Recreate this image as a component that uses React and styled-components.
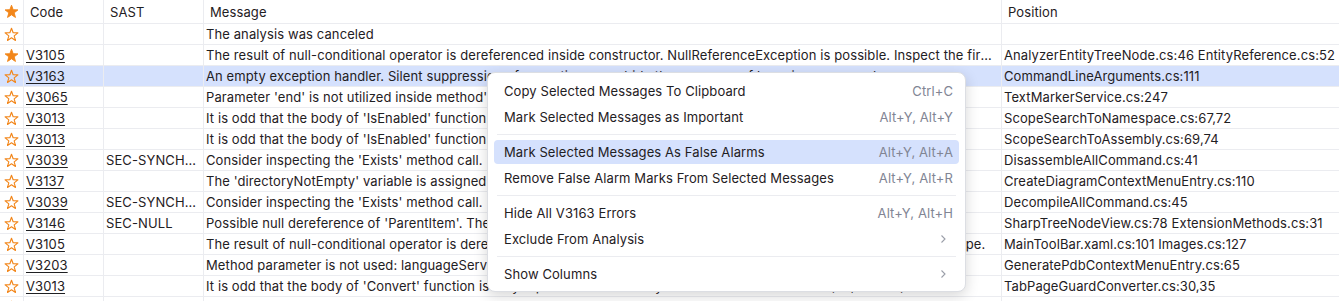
import React from "react";
import styled, { createGlobalStyle } from "styled-components";

const GlobalStyle = createGlobalStyle`
  body {
    margin: 0;
    background: #ffffff;
    font-family: Inter, "Noto Sans", sans-serif;
    font-size: 13px;
    letter-spacing: 0.1px;
    color: #1f2023;
  }
`;

const Page = styled.div`
  position: relative;
  width: 1339px;
  height: 301px;
  overflow: hidden;
`;

const Grid = styled.div`
  display: grid;
  grid-template-columns: 24px 80px 100px 798px 1fr;
`;

const Row = styled.div`
  display: contents;
`;

const Cell = styled.div`
  height: ${({ $header }) => ($header ? "24px" : "21px")};
  display: flex;
  align-items: center;
  padding: 0 ${({ $header }) => ($header ? "6px" : "2px")};
  padding-right: ${({ $wide }) => ($wide ? "9px" : undefined)};
  box-sizing: border-box;
  border-right: ${({ $last }) => ($last ? "none" : "1px solid #ebecf0")};
  border-bottom: 1px solid #ebecf0;
  background: ${({ $selected }) => ($selected ? "#d5e1fd" : "#ffffff")};
  white-space: nowrap;
  overflow: hidden;
  min-width: 0;
`;

const Text = styled.span`
  overflow: hidden;
  text-overflow: ellipsis;
  white-space: nowrap;
`;

const CodeLink = styled.span`
  text-decoration: underline;
  text-underline-offset: 2px;
  color: #1f2023;
`;

const StarCell = styled(Cell)`
  justify-content: center;
  padding: 0 1px 0 0;
`;

const Menu = styled.div`
  position: absolute;
  left: 487px;
  top: 72px;
  width: 479px;
  box-sizing: border-box;
  background: #ffffff;
  border: 1px solid #dcdee3;
  border-radius: 8px;
  box-shadow: 0 4px 14px rgba(0, 0, 0, 0.16);
  padding: 5px 6px 4px;
  display: flex;
  flex-direction: column;
`;

const Item = styled.div`
  height: 24px;
  margin: 1px 0;
  display: flex;
  align-items: center;
  justify-content: space-between;
  padding: 0 6px 0 10px;
  border-radius: 4px;
  background: ${({ $active }) => ($active ? "#d5e1fd" : "transparent")};
  color: #1f2023;
`;

const Shortcut = styled.span`
  color: #818594;
`;

const Chevron = styled.span`
  display: flex;
  align-items: center;
  margin-right: 6px;
`;

const Separator = styled.div`
  height: 1px;
  margin: 4px 3px;
  background: #ebecf0;
`;

const Star = ({ filled }) => (
  <svg width="15" height="15" viewBox="0 0 16 16">
    <path
      d="M8 1.3 L9.76 6.07 L14.85 6.28 L10.85 9.43 L12.23 14.32 L8 11.5 L3.77 14.32 L5.15 9.43 L1.15 6.28 L6.24 6.07 Z"
      fill={filled ? "#f2861a" : "none"}
      stroke="#f2861a"
      strokeWidth={filled ? 1 : 1.2}
      strokeLinejoin="round"
    />
  </svg>
);

const rows = [
  { code: "", sast: "", msg: "The analysis was canceled", pos: "" },
  {
    fav: true,
    code: "V3105",
    sast: "",
    msg: "The result of null-conditional operator is dereferenced inside constructor. NullReferenceException is possible. Inspect the first argument 'node'.",
    pos: "AnalyzerEntityTreeNode.cs:46 EntityReference.cs:52",
  },
  {
    selected: true,
    code: "V3163",
    sast: "",
    msg: "An empty exception handler. Silent suppression of exceptions may hide the presence of bugs in source code.",
    pos: "CommandLineArguments.cs:111",
  },
  { code: "V3065", sast: "", msg: "Parameter 'end' is not utilized inside method's body.", pos: "TextMarkerService.cs:247" },
  {
    code: "V3013",
    sast: "",
    msg: "It is odd that the body of 'IsEnabled' function is fully equivalent to the body of 'IsVisible' function.",
    pos: "ScopeSearchToNamespace.cs:67,72",
  },
  {
    code: "V3013",
    sast: "",
    msg: "It is odd that the body of 'IsEnabled' function is fully equivalent to the body of 'IsVisible' function.",
    pos: "ScopeSearchToAssembly.cs:69,74",
  },
  {
    code: "V3039",
    sast: "SEC-SYNCHRONIZATION",
    msg: "Consider inspecting the 'Exists' method call. Using the file path could lead to race condition.",
    pos: "DisassembleAllCommand.cs:41",
  },
  {
    code: "V3137",
    sast: "",
    msg: "The 'directoryNotEmpty' variable is assigned but is not used by the end of the function.",
    pos: "CreateDiagramContextMenuEntry.cs:110",
  },
  {
    code: "V3039",
    sast: "SEC-SYNCHRONIZATION",
    msg: "Consider inspecting the 'Exists' method call. Using the file path could lead to race condition.",
    pos: "DecompileAllCommand.cs:45",
  },
  {
    code: "V3146",
    sast: "SEC-NULL",
    msg: "Possible null dereference of 'ParentItem'. The 'FirstOrDefault' can return default null value.",
    pos: "SharpTreeNodeView.cs:78 ExtensionMethods.cs:31",
  },
  {
    code: "V3105",
    sast: "",
    msg: "The result of null-conditional operator is dereferenced inside method. NullReferenceException is possible. Inspect the scope.",
    pos: "MainToolBar.xaml.cs:101 Images.cs:127",
  },
  {
    code: "V3203",
    sast: "",
    msg: "Method parameter is not used: languageService.",
    pos: "GeneratePdbContextMenuEntry.cs:65",
  },
  {
    code: "V3013",
    sast: "",
    msg: "It is odd that the body of 'Convert' function is fully equivalent to the body of 'ConvertBack' function (30, line 35).",
    pos: "TabPageGuardConverter.cs:30,35",
  },
  { code: "V3013", sast: "", msg: "", pos: "" },
];

const menuGroups = [
  [
    { label: "Copy Selected Messages To Clipboard", shortcut: "Ctrl+C" },
    { label: "Mark Selected Messages as Important", shortcut: "Alt+Y, Alt+Y" },
  ],
  [
    { label: "Mark Selected Messages As False Alarms", shortcut: "Alt+Y, Alt+A", active: true },
    { label: "Remove False Alarm Marks From Selected Messages", shortcut: "Alt+Y, Alt+R" },
  ],
  [
    { label: "Hide All V3163 Errors", shortcut: "Alt+Y, Alt+H" },
    { label: "Exclude From Analysis", sub: true },
  ],
  [{ label: "Show Columns", sub: true }],
];

const ChevronIcon = () => (
  <svg width="8" height="10" viewBox="0 0 8 10">
    <path d="M2.5 1.5 L6 5 L2.5 8.5" fill="none" stroke="#9a9ea8" strokeWidth="1.1" />
  </svg>
);

const App = () => {
  return (
    <Page>
      <GlobalStyle />
      <Grid>
        <Row>
          <StarCell $header>
            <Star filled />
          </StarCell>
          <Cell $header>Code</Cell>
          <Cell $header>SAST</Cell>
          <Cell $header>Message</Cell>
          <Cell $header $last>
            Position
          </Cell>
        </Row>
        {rows.map((r, i) => (
          <Row key={i}>
            <StarCell $selected={r.selected}>
              <Star filled={r.fav} />
            </StarCell>
            <Cell $selected={r.selected}>{r.code && <CodeLink>{r.code}</CodeLink>}</Cell>
            <Cell $selected={r.selected}>
              <Text>{r.sast}</Text>
            </Cell>
            <Cell $selected={r.selected} $wide>
              <Text>{r.msg}</Text>
            </Cell>
            <Cell $selected={r.selected} $last>
              <Text>{r.pos}</Text>
            </Cell>
          </Row>
        ))}
      </Grid>
      <Menu>
        {menuGroups.map((group, gi) => (
          <React.Fragment key={gi}>
            {gi > 0 && <Separator />}
            {group.map((item) => (
              <Item key={item.label} $active={item.active}>
                <span>{item.label}</span>
                {item.sub ? (
                  <Chevron>
                    <ChevronIcon />
                  </Chevron>
                ) : (
                  <Shortcut>{item.shortcut}</Shortcut>
                )}
              </Item>
            ))}
          </React.Fragment>
        ))}
      </Menu>
    </Page>
  );
};

export default App;
